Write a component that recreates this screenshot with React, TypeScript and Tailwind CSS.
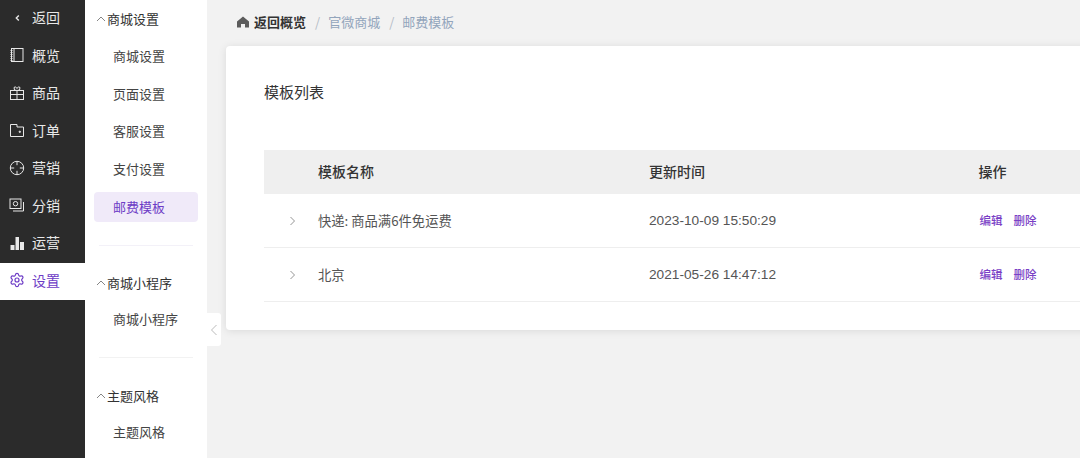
import React from "react";
import { Settings } from "lucide-react";

const font = { fontFamily: '"Noto Sans CJK SC", "Liberation Sans", sans-serif' };

const S = ({ children }: { children: React.ReactNode }) => (
  <svg width="16" height="16" viewBox="0 0 16 16" fill="none" stroke="currentColor" strokeWidth="1">
    {children}
  </svg>
);

const icons: Record<string, React.ReactNode> = {
  back: <S><path d="M9.8 5.5 L7.3 8 L9.8 10.5" strokeWidth="1.4" /></S>,
  book: <S><rect x="2.5" y="1.5" width="11.5" height="13" /><path d="M5 1.5V14.5M1.5 3.5h2M1.5 5.5h2M1.5 7.5h2M1.5 9.5h2M1.5 11.5h2M1.5 13.5h2" /></S>,
  gift: <S><rect x="1.5" y="5.5" width="13" height="9" /><path d="M1.5 9.5h13M8 5.5v9M8 5.5 5.5 5 5 2.5 6.5 1.8 8 3.5 9.5 1.8 11 2.5 10.5 5z" /></S>,
  order: <S><path d="M1.5 2.5h6.5v2.5h6.5v9.5h-13z" /><circle cx="10.8" cy="9.8" r=".7" fill="currentColor" /></S>,
  target: <S><circle cx="8" cy="8" r="6.7" /><path d="M8 1v4.2M8 10.8V15M1 8h4.2M10.8 8H15" /></S>,
  share: <S><rect x="1" y="2" width="11" height="9.5" /><circle cx="6.5" cy="6.7" r="2.2" /><path d="M14.5 5v9H4" /></S>,
  chart: (
    <svg width="16" height="16" viewBox="0 0 16 16" fill="currentColor">
      <rect x="1.5" y="10" width="4" height="5" />
      <rect x="6.5" y="2" width="3.5" height="13" />
      <rect x="11" y="7" width="4" height="8" />
    </svg>
  ),
  gear: <Settings size={16} strokeWidth={1.8} />,
};

const navItems = [
  ["back", "返回"],
  ["book", "概览"],
  ["gift", "商品"],
  ["order", "订单"],
  ["target", "营销"],
  ["share", "分销"],
  ["chart", "运营"],
  ["gear", "设置"],
];

const Heading = ({ label, short }: { label: string; short?: boolean }) => (
  <div
    className={
      short
        ? "flex h-[36px] items-center pl-[11px] pt-[2px] text-[13px] text-[#333333]"
        : "flex h-[36.5px] items-center pl-[11px] text-[13px] text-[#333333]"
    }
  >
    <svg width="10" height="10" viewBox="0 0 10 10" fill="none" stroke="#777777" strokeWidth="0.9" className="mr-[1px] shrink-0">
      <path d="M1 7 L5 3 L9 7" />
    </svg>
    <span>{label}</span>
  </div>
);

const Item = ({ label, active }: { label: string; active?: boolean }) =>
  active ? (
    <div className="mx-[9px] mt-[5px] flex h-[30px] items-center rounded-[4px] bg-[#f0eaf9] pl-[19px] text-[13px] text-[#6d3cc6]">
      {label}
    </div>
  ) : (
    <div className="flex h-[37.5px] items-center pl-[28px] text-[13px] text-[#444444]">{label}</div>
  );

const rows = [
  ["快递: 商品满6件免运费", "2023-10-09 15:50:29"],
  ["北京", "2021-05-26 14:47:12"],
];

export default function App() {
  return (
    <div className="flex h-[458px] w-[1080px] overflow-hidden bg-[#f2f2f2]" style={font}>
      <aside className="h-full w-[85px] shrink-0 bg-[#2b2b2b]">
        {navItems.map(([icon, label]) => {
          const active = label === "设置";
          return (
            <div
              key={label}
              className={
                active
                  ? "flex h-[37.5px] items-center gap-[7px] bg-white pb-[2px] pl-[9px] text-[14px] text-[#6d3cc6]"
                  : "flex h-[37.5px] items-center gap-[7px] pb-[2px] pl-[9px] text-[14px] text-[#e8e8e8]"
              }
            >
              {icons[icon]}
              <span>{label}</span>
            </div>
          );
        })}
      </aside>

      <nav className="relative h-full w-[122px] shrink-0 bg-white pt-[0.5px]">
        <Heading label="商城设置" />
        <Item label="商城设置" />
        <Item label="页面设置" />
        <Item label="客服设置" />
        <Item label="支付设置" />
        <Item label="邮费模板" active />
        <div className="mx-[14px] mb-[18px] mt-[23px] h-px bg-[#f3f1f8]" />
        <Heading label="商城小程序" short />
        <Item label="商城小程序" />
        <div className="mx-[14px] mb-[19px] mt-[19.5px] h-px bg-[#f2f2f2]" />
        <Heading label="主题风格" short />
        <Item label="主题风格" />
        <div className="absolute left-[122px] top-[313px] flex h-[33px] w-[14px] items-center justify-center rounded-r-[3px] bg-white">
          <svg width="8" height="12" viewBox="0 0 8 12" fill="none" stroke="#bbbbbb" strokeWidth="1">
            <path d="M6.5 1 L1.5 6 L6.5 11" />
          </svg>
        </div>
      </nav>

      <main className="min-w-0 flex-1 pl-[19px]">
        <div className="flex h-[46px] items-center pb-[3px] pl-[10px] text-[13px]">
          <svg width="14" height="14" viewBox="0 0 14 14" fill="#5c5c5c" className="mr-[4px]">
            <path d="M7 1.5 L13 6.5 V12.5 H9 V9 H5 V12.5 H1 V6.5 Z" />
          </svg>
          <span className="font-bold text-[#333333]">返回概览</span>
          <span className="ml-[9px] mr-[8px] text-[#b4bcc6]">/</span>
          <span className="text-[#93a5bc]">官微商城</span>
          <span className="ml-[9px] mr-[8px] text-[#b4bcc6]">/</span>
          <span className="text-[#93a5bc]">邮费模板</span>
        </div>

        <section className="h-[284px] w-[874px] rounded-l-[4px] bg-white pl-[38px] shadow-[0_1px_8px_rgba(0,0,0,0.1)]">
          <h2 className="flex h-[104px] items-center pb-[12px] text-[15px] font-normal text-[#333333]">模板列表</h2>
          <div className="flex h-[44px] items-center bg-[#efefef] pb-[2px] text-[14px] font-medium text-[#333333]">
            <div className="w-[54px]" />
            <div className="w-[331px]">模板名称</div>
            <div className="w-[329.5px]">更新时间</div>
            <div>操作</div>
          </div>
          {rows.map(([name, time]) => (
            <div key={name} className="flex h-[54px] items-center border-b border-[#eeeeee] text-[13.3px] text-[#555555]">
              <div className="flex w-[54px] pl-[24px] pt-[1px]">
                <svg width="9" height="10" viewBox="0 0 9 10" fill="none" stroke="#888888" strokeWidth="0.9">
                  <path d="M2.5 1 L6.5 5 L2.5 9" />
                </svg>
              </div>
              <div className="w-[331px]">{name}</div>
              <div className="w-[329.5px] pt-[1px] text-[13.7px]" style={{ fontFamily: '"Liberation Sans", sans-serif' }}>{time}</div>
              <div className="ml-[1px] flex gap-[11px] text-[11.5px] font-medium text-[#7a3fc6]">
                <span>编辑</span>
                <span>删除</span>
              </div>
            </div>
          ))}
        </section>
      </main>
    </div>
  );
}
